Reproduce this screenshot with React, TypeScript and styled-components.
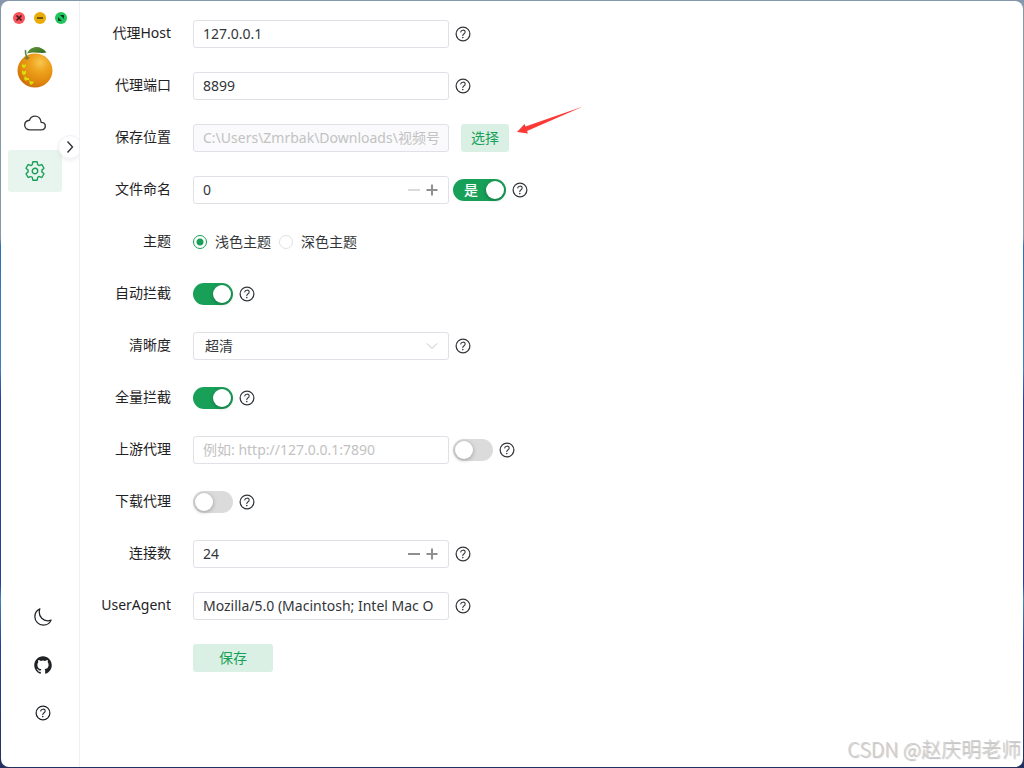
import React, { useState } from "react";
import styled, { createGlobalStyle, css } from "styled-components";
import {
  IoCloudOutline,
  IoHelpCircleOutline,
  IoLogoGithub,
  IoMoonOutline,
  IoSettingsOutline,
} from "react-icons/io5";

const GREEN = "#18a058";
const BORDER = "#e0e0e6";
const TEXT = "#333639";

const GlobalStyle = createGlobalStyle`
  * { box-sizing: border-box; }
  body {
    margin: 0;
    background: linear-gradient(to bottom, #8497ab 0, #8497ab 31%, #2f72b4 32%, #3f7fc0 48%, #2b3f9b 52%, #2b3f9b 76%, #3f86b4 78%, #2a3f99 84%, #22305f 100%);
    color: ${TEXT};
    font-family: "Noto Sans", "Noto Sans CJK SC", sans-serif;
    font-size: 14px;
    line-height: 22px;
  }
  button, input, select { font: inherit; color: inherit; margin: 0; }
  button { cursor: pointer; border: 0; padding: 0; background: none; }
`;

const Desktop = styled.div`
  min-height: 100vh;
  padding: 1px;
  display: flex;
`;

const AppWindow = styled.div`
  position: relative;
  flex: 1;
  display: flex;
  background: #fff;
  border-radius: 8px;
  overflow: hidden;
`;

const Sidebar = styled.aside`
  position: relative;
  flex: none;
  width: 79px;
  display: flex;
  flex-direction: column;
  border-right: 1px solid #efeff5;
  overflow: hidden;
`;

const WindowControls = styled.div`
  display: flex;
  gap: 9px;
  padding: 11px 0 0 12px;
`;

const ControlDot = styled.button<{ $color: string }>`
  width: 12px;
  height: 12px;
  border-radius: 50%;
  background: ${(p) => p.$color};
  svg { display: block; }
`;

const Logo = styled.svg`
  display: block;
  width: 36px;
  height: 44px;
  margin: 21px 0 0 16px;
`;

const Menu = styled.nav`
  display: flex;
  flex-direction: column;
  gap: 6px;
  margin: 13px 17px 0 7px;
`;

const MenuItem = styled.a<{ $active?: boolean }>`
  height: 42px;
  display: flex;
  align-items: center;
  justify-content: center;
  border-radius: 3px;
  color: ${(p) => (p.$active ? GREEN : TEXT)};
  background: ${(p) => (p.$active ? "#e7f5ee" : "transparent")};
  svg { width: 22px; height: 22px; }
`;

const CollapseButton = styled.button`
  position: absolute;
  top: 134px;
  right: -3px;
  width: 24px;
  height: 24px;
  display: flex;
  align-items: center;
  justify-content: center;
  border: 1px solid #efeff5;
  border-radius: 50%;
  background: #fff;
  box-shadow: 0 2px 4px rgba(0, 0, 0, 0.06);
`;

const SidebarFooter = styled.div`
  display: flex;
  flex-direction: column;
  align-items: center;
  gap: 28px;
  margin-top: auto;
  padding: 0 0 44px 6px;
`;

const FooterButton = styled.button`
  width: 20px;
  height: 20px;
  display: flex;
  align-items: center;
  justify-content: center;
  color: #1f2225;
`;

const Main = styled.main`
  flex: 1;
  min-width: 0;
  padding: 19px 20px 20px 13px;
`;

const Form = styled.form`
  display: flex;
  flex-direction: column;
  gap: 24px;
`;

const Row = styled.div`
  display: grid;
  grid-template-columns: 78px 1fr;
  column-gap: 22px;
  height: 28px;
`;

const Label = styled.label`
  line-height: 26px;
  text-align: right;
  white-space: nowrap;
  color: #1f2225;
`;

const Content = styled.div`
  display: flex;
  align-items: center;
  grid-column: 2;
`;

const fieldBox = css`
  width: 256px;
  height: 28px;
  border: 1px solid ${BORDER};
  border-radius: 3px;
  background: #fff;
  outline: none;
`;

const TextInput = styled.input`
  ${fieldBox}
  padding: 0 9px 2px;
  &:disabled {
    background: #fafafc;
    color: #c2c2c2;
  }
  &::placeholder { color: #c2c2c2; opacity: 1; }
`;

const NumberBox = styled.div`
  ${fieldBox}
  display: flex;
  align-items: center;
  padding: 0 7px 0 0;
`;

const NumberInput = styled.input`
  flex: 1;
  min-width: 0;
  height: 26px;
  padding: 0 9px 2px;
  border: 0;
  background: none;
  outline: none;
`;

const StepButton = styled.button`
  width: 18px;
  height: 18px;
  display: flex;
  align-items: center;
  justify-content: center;
  color: #8f8f8f;
  &:disabled { color: #dadada; }
`;

const SelectBox = styled.div`
  ${fieldBox}
  display: flex;
  align-items: center;
  padding-right: 9px;
`;

const SelectInput = styled.select`
  flex: 1;
  height: 26px;
  padding: 0 11px;
  border: 0;
  background: none;
  appearance: none;
  outline: none;
`;

const SwitchLabel = styled.label<{ $gap?: boolean }>`
  display: flex;
  margin-left: ${(p) => (p.$gap ? "4px" : "0")};
`;

const SwitchInput = styled.input<{ $wide?: boolean }>`
  appearance: none;
  position: relative;
  width: ${(p) => (p.$wide ? "53px" : "40px")};
  height: 22px;
  border-radius: 11px;
  background: #dbdbdb;
  cursor: pointer;
  &::before {
    content: "";
    position: absolute;
    top: 2px;
    left: 2px;
    width: 18px;
    height: 18px;
    border-radius: 50%;
    background: #fff;
    box-shadow: 0 1px 4px rgba(0, 0, 0, 0.3);
  }
  &:checked { background: ${GREEN}; }
  &:checked::before { left: auto; right: 2px; }
`;

const SwitchText = styled.span`
  position: relative;
  width: 0;
  left: 11px;
  z-index: 1;
  color: #fff;
  font-weight: 500;
  white-space: nowrap;
  pointer-events: none;
`;

const RadioLabel = styled.label`
  display: flex;
  align-items: center;
  gap: 8px;
  margin-right: 8px;
`;

const RadioInput = styled.input`
  appearance: none;
  width: 14px;
  height: 14px;
  border: 1px solid ${BORDER};
  border-radius: 50%;
  &:checked {
    border-color: ${GREEN};
    background: radial-gradient(circle, ${GREEN} 3px, #fff 4px);
  }
`;

const HelpButton = styled.button`
  display: flex;
  margin-left: 4px;
`;

const ActionButton = styled.button<{ $wide?: boolean; $spaced?: boolean }>`
  height: 28px;
  width: ${(p) => (p.$wide ? "80px" : "48px")};
  margin-left: ${(p) => (p.$spaced ? "12px" : "0")};
  border-radius: 3px;
  background: #dbf0e4;
  color: ${GREEN};
`;

const Pointer = styled.svg`
  align-self: flex-start;
  margin: -20px 0 0 7px;
`;

const Watermark = styled.div`
  position: absolute;
  right: 2px;
  bottom: 4px;
  font-family: "Noto Sans CJK SC", sans-serif;
  font-weight: 300;
  font-size: 20px;
  line-height: 28px;
  color: #cfcfcf;
  text-shadow: 1px 1px 1px #bbb;
  pointer-events: none;
`;

const Help = () => (
  <HelpButton type="button" aria-label="帮助">
    <IoHelpCircleOutline size={20} />
  </HelpButton>
);

function Switch({ id, on, text, gap }: { id: string; on?: boolean; text?: string; gap?: boolean }) {
  return (
    <SwitchLabel $gap={gap}>
      {text && <SwitchText>{text}</SwitchText>}
      <SwitchInput id={id} aria-label={id} type="checkbox" role="switch" defaultChecked={on} $wide={!!text} />
    </SwitchLabel>
  );
}

function NumberField({ id, initial }: { id: string; initial: number }) {
  const [value, setValue] = useState(initial);
  return (
    <NumberBox>
      <NumberInput
        id={id}
        inputMode="numeric"
        value={value}
        onChange={(e) => setValue(Number(e.target.value) || 0)}
      />
      <StepButton type="button" aria-label="减少" disabled={value <= 0} onClick={() => setValue(value - 1)}>
        <svg width="12" height="12" stroke="currentColor" strokeWidth="2">
          <path d="M0 6H12" />
        </svg>
      </StepButton>
      <StepButton type="button" aria-label="增加" onClick={() => setValue(value + 1)}>
        <svg width="12" height="12" stroke="currentColor" strokeWidth="2">
          <path d="M0.5 6H11.5M6 0.5V11.5" />
        </svg>
      </StepButton>
    </NumberBox>
  );
}

function Field({ id, label, children }: { id: string; label: string; children: React.ReactNode }) {
  return (
    <Row>
      <Label htmlFor={id}>{label}</Label>
      <Content>{children}</Content>
    </Row>
  );
}

function OrangeLogo() {
  return (
    <Logo viewBox="0 0 36 44" aria-hidden="true">
      <defs>
        <radialGradient id="peel" cx="0.65" cy="0.27" r="0.8">
          <stop offset="0" stopColor="#f8c64d" />
          <stop offset="0.35" stopColor="#eda21c" />
          <stop offset="0.75" stopColor="#df860b" />
          <stop offset="1" stopColor="#c9680b" />
        </radialGradient>
        <linearGradient id="leaf" x1="0" y1="0" x2="1" y2="1">
          <stop offset="0" stopColor="#6a9c3c" />
          <stop offset="1" stopColor="#2c6520" />
        </linearGradient>
      </defs>
      <ellipse cx="18" cy="25.5" rx="17.5" ry="17" fill="url(#peel)" />
      <path d="M10 8.500C14 0 24 0 29.500 7.500C24 9 18 6 10 8.500Z" fill="url(#leaf)" />
      <path d="M8.500 5C8 8 9 11 10.500 13.500" stroke="#57843a" strokeWidth="1.6" fill="none" />
      <path d="M7 13L10 11.500L13 12.500L10 15Z" fill="#8b7a2a" />
      <g fill="#d8e00c">
        <path d="M5 19l2 1 2-1-.5 3-1.500 1-2-1z" />
        <path d="M5 25.500l2 1 2-1v3l-2 2-2-2z" />
        <path d="M7 34l1-3 2 2 2 0v2l-2 0-1 1z" />
        <path d="M12 35l2 1.500 3 0-1 2-2 1.500-1-1z" />
      </g>
    </Logo>
  );
}

export default function App() {
  return (
    <>
      <GlobalStyle />
      <Desktop>
        <AppWindow>
          <Sidebar>
            <WindowControls>
              <ControlDot $color="#f9535a" aria-label="关闭">
                <svg width="12" height="12" stroke="#42181a" strokeWidth="1.5">
                  <path d="M3.500 3.500L8.500 8.500M8.500 3.500L3.500 8.500" />
                </svg>
              </ControlDot>
              <ControlDot $color="#e8ab08" aria-label="最小化">
                <svg width="12" height="12" stroke="#46380c" strokeWidth="1.5">
                  <path d="M3 6H9" />
                </svg>
              </ControlDot>
              <ControlDot $color="#20c45c" aria-label="最大化">
                <svg width="12" height="12" fill="#0d3f20">
                  <path d="M5 3H9V7ZM3 5V9H7Z" />
                </svg>
              </ControlDot>
            </WindowControls>
            <OrangeLogo />
            <Menu>
              <MenuItem href="#home" aria-label="首页"><IoCloudOutline /></MenuItem>
              <MenuItem href="#settings" aria-label="设置" $active><IoSettingsOutline /></MenuItem>
            </Menu>
            <CollapseButton aria-label="展开">
              <svg width="8" height="12" fill="none" stroke="#333639" strokeWidth="1.4">
                <path d="M1.500 0.500L6.500 6L1.500 11.500" />
              </svg>
            </CollapseButton>
            <SidebarFooter>
              <FooterButton aria-label="深色模式"><IoMoonOutline size={20} /></FooterButton>
              <FooterButton aria-label="GitHub"><IoLogoGithub size={20} /></FooterButton>
              <FooterButton aria-label="帮助"><IoHelpCircleOutline size={20} /></FooterButton>
            </SidebarFooter>
          </Sidebar>
          <Main>
            <Form onSubmit={(e) => e.preventDefault()}>
              <Field id="host" label="代理Host">
                <TextInput id="host" defaultValue="127.0.0.1" />
                <Help />
              </Field>
              <Field id="port" label="代理端口">
                <TextInput id="port" defaultValue="8899" />
                <Help />
              </Field>
              <Field id="dir" label="保存位置">
                <TextInput id="dir" disabled defaultValue="C:\Users\Zmrbak\Downloads\视频号" />
                <ActionButton type="button" $spaced>选择</ActionButton>
                <Pointer width="68" height="30" viewBox="0 0 68 30" aria-hidden="true">
                  <path d="M1 28L8.500 20L9.500 22.500L67 2.500L11 27L12 29.500Z" fill="#fc3a35" />
                </Pointer>
              </Field>
              <Field id="naming" label="文件命名">
                <NumberField id="naming" initial={0} />
                <Switch id="naming-time" text="是" on gap />
                <Help />
              </Field>
              <Field id="theme-light" label="主题">
                <RadioLabel>
                  <RadioInput id="theme-light" type="radio" name="theme" defaultChecked />浅色主题
                </RadioLabel>
                <RadioLabel>
                  <RadioInput type="radio" name="theme" />深色主题
                </RadioLabel>
              </Field>
              <Field id="auto" label="自动拦截">
                <Switch id="auto" on />
                <Help />
              </Field>
              <Field id="quality" label="清晰度">
                <SelectBox>
                  <SelectInput id="quality"><option>超清</option></SelectInput>
                  <svg width="14" height="8" fill="none" stroke="#c2c2c2" aria-hidden="true">
                    <path d="M2 1.500L7 6.500L12 1.500" />
                  </svg>
                </SelectBox>
                <Help />
              </Field>
              <Field id="full" label="全量拦截">
                <Switch id="full" on />
                <Help />
              </Field>
              <Field id="upstream" label="上游代理">
                <TextInput id="upstream" placeholder="例如: http://127.0.0.1:7890" />
                <Switch id="upstream-on" gap />
                <Help />
              </Field>
              <Field id="download" label="下载代理">
                <Switch id="download" />
                <Help />
              </Field>
              <Field id="connections" label="连接数">
                <NumberField id="connections" initial={24} />
                <Help />
              </Field>
              <Field id="agent" label="UserAgent">
                <TextInput id="agent" defaultValue="Mozilla/5.0 (Macintosh; Intel Mac O" />
                <Help />
              </Field>
              <Row>
                <Content>
                  <ActionButton type="submit" $wide>保存</ActionButton>
                </Content>
              </Row>
            </Form>
          </Main>
          <Watermark>CSDN @赵庆明老师</Watermark>
        </AppWindow>
      </Desktop>
    </>
  );
}
